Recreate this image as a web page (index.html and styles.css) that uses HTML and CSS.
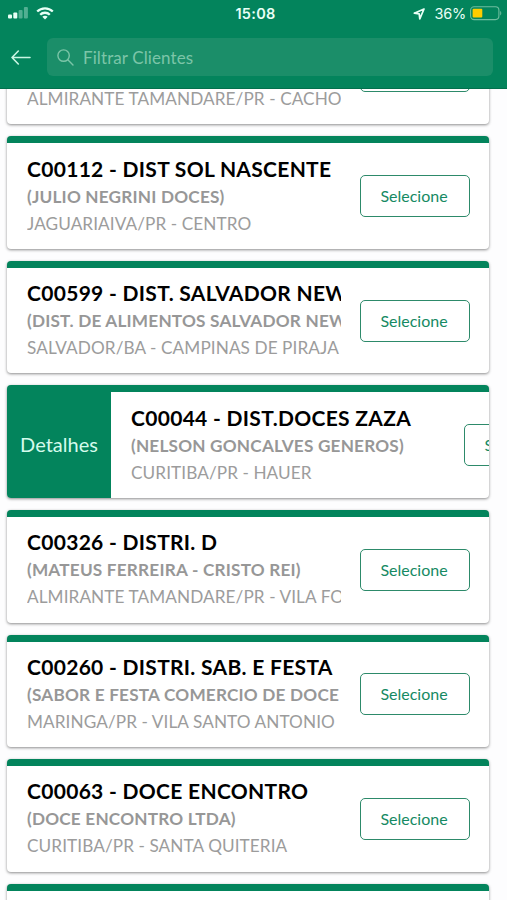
FILE: index.html
```html
<!DOCTYPE html>
<html lang="pt-BR">
<head>
    <meta charset="UTF-8">
    <meta name="viewport" content="width=device-width, initial-scale=1.0">
    <title>Clientes</title>
    <link rel="stylesheet" href="styles.css">
</head>
<body>
    <header class="header">
        <div class="status">
            <div class="status-left">
                <svg width="20" height="12" viewBox="0 0 20 12" fill="#e9fff6">
                    <rect x="0" y="7.5" width="4" height="4" rx="1"/>
                    <rect x="5.3" y="5.5" width="4" height="6" rx="1"/>
                    <rect x="10.6" y="3" width="4" height="8.5" rx="1" opacity=".35"/>
                    <rect x="15.9" y="0" width="4" height="11.5" rx="1" opacity=".35"/>
                </svg>
                <svg width="18" height="13" viewBox="0 0 18 13" fill="none" stroke="#e9fff6" stroke-width="2.3">
                    <path d="M1.2 4.5C5.5.2 12.5.2 16.8 4.5"/>
                    <path d="M4.2 7.7c2.6-2.6 7-2.6 9.6 0"/>
                    <path d="M9 12.5 6.3 9.8c1.5-1.4 3.9-1.4 5.4 0z" fill="#e9fff6" stroke="none"/>
                </svg>
            </div>
            <div class="time">15:08</div>
            <div class="status-right">
                <svg class="location" width="12" height="12" viewBox="0 0 12 12" fill="none" stroke="#e9fff6" stroke-width="1.7" stroke-linejoin="round">
                    <path d="M11 1 1.3 5.2l4.9.7.6 4.9z"/>
                </svg>
                <span class="percent">36%</span>
                <svg width="32" height="15" viewBox="0 0 32 15">
                    <rect x=".6" y=".8" width="28.3" height="12.8" rx="3.5" fill="none" stroke="#6fbd9f" stroke-width="1.1"/>
                    <rect x="2.6" y="2.8" width="9.7" height="8.8" rx="1" fill="#fc0"/>
                    <path d="M30.2 5v4.4c1.5-.6 1.5-3.8 0-4.4z" fill="#6fbd9f"/>
                </svg>
            </div>
        </div>
        <div class="toolbar">
            <svg class="back" width="20" height="15" viewBox="0 0 20 15" fill="none" stroke="#c9f5e3" stroke-width="1.6" stroke-linecap="round" stroke-linejoin="round">
                <path d="M19 7.5H1M7.3 1 1 7.5 7.3 14"/>
            </svg>
            <div class="search">
                <svg width="17" height="17" viewBox="0 0 17 17" fill="none" stroke="#7cc5a8" stroke-width="1.4" stroke-linecap="round">
                    <circle cx="6.6" cy="6.6" r="5.7"/>
                    <path d="m10.8 10.8 5.2 5.2"/>
                </svg>
                <span class="placeholder">Filtrar Clientes</span>
            </div>
        </div>
    </header>

    <main class="list">
        <div class="card first">
            <div class="content">
                <div class="info">
                    <div class="name"></div>
                    <div class="company"></div>
                    <div class="city">ALMIRANTE TAMANDARE/PR - CACHO</div>
                </div>
                <button class="select"></button>
            </div>
        </div>
        <div class="card">
            <div class="content">
                <div class="info">
                    <div class="name">C00112 - DIST SOL NASCENTE</div>
                    <div class="company">(JULIO NEGRINI DOCES)</div>
                    <div class="city">JAGUARIAIVA/PR - CENTRO</div>
                </div>
                <button class="select">Selecione</button>
            </div>
        </div>
        <div class="card">
            <div class="content">
                <div class="info">
                    <div class="name">C00599 - DIST. SALVADOR NEW</div>
                    <div class="company">(DIST. DE ALIMENTOS SALVADOR NEW</div>
                    <div class="city">SALVADOR/BA - CAMPINAS DE PIRAJA</div>
                </div>
                <button class="select">Selecione</button>
            </div>
        </div>
        <div class="card swiped">
            <div class="details">Detalhes</div>
            <div class="content">
                <div class="info">
                    <div class="name">C00044 - DIST.DOCES ZAZA</div>
                    <div class="company">(NELSON GONCALVES GENEROS)</div>
                    <div class="city">CURITIBA/PR - HAUER</div>
                </div>
                <button class="select">Selecione</button>
            </div>
        </div>
        <div class="card">
            <div class="content">
                <div class="info">
                    <div class="name">C00326 - DISTRI. D</div>
                    <div class="company">(MATEUS FERREIRA - CRISTO REI)</div>
                    <div class="city">ALMIRANTE TAMANDARE/PR - VILA FO</div>
                </div>
                <button class="select">Selecione</button>
            </div>
        </div>
        <div class="card">
            <div class="content">
                <div class="info">
                    <div class="name">C00260 - DISTRI. SAB. E FESTA</div>
                    <div class="company">(SABOR E FESTA COMERCIO DE DOCE</div>
                    <div class="city">MARINGA/PR - VILA SANTO ANTONIO</div>
                </div>
                <button class="select">Selecione</button>
            </div>
        </div>
        <div class="card">
            <div class="content">
                <div class="info">
                    <div class="name">C00063 - DOCE ENCONTRO</div>
                    <div class="company">(DOCE ENCONTRO LTDA)</div>
                    <div class="city">CURITIBA/PR - SANTA QUITERIA</div>
                </div>
                <button class="select">Selecione</button>
            </div>
        </div>
        <div class="card"></div>
    </main>
</body>
</html>
```
FILE: styles.css
```css
* {
    box-sizing: border-box;
}

body {
    margin: 0;
    height: 900px;
    overflow: hidden;
    display: flex;
    flex-direction: column;
    background-color: #fdfdfe;
    font-family: Lato, "Open Sans", sans-serif;
}

svg {
    display: block;
    flex-shrink: 0;
}

.header {
    height: 89px;
    flex-shrink: 0;
    background-color: #03845c;
    border-bottom: 1px solid #02704d;
}

.status {
    height: 27px;
    display: grid;
    grid-template-columns: 1fr auto 1fr;
    align-items: center;
    padding: 0 5px 0 8px;
    font-family: Inter, sans-serif;
    color: #e9fff6;
}

.status-left {
    display: flex;
    gap: 8px;
}

.time {
    margin-left: 1px;
    font-size: 14.5px;
    font-weight: 600;
    letter-spacing: 0.3px;
}

.status-right {
    display: flex;
    justify-content: flex-end;
    align-items: center;
}

.percent {
    font-size: 14.5px;
    margin: 0 4px 0 9px;
    letter-spacing: -0.2px;
}

.toolbar {
    display: flex;
    align-items: center;
    padding: 11px 14px 0 11px;
}

.search {
    flex: 1;
    display: flex;
    align-items: center;
    height: 38px;
    margin-left: 16px;
    padding-left: 10px;
    border-radius: 6px;
    background-color: #1b8e69;
}

.placeholder {
    margin-left: 9px;
    color: #7cc5a8;
    font-size: 17px;
    letter-spacing: 0.1px;
}

.list {
    flex: 1;
    overflow: hidden;
    padding: 0 18px 0 7px;
}

.card {
    display: flex;
    height: 112.6px;
    margin-bottom: 12px;
    border-top: 7px solid #03845c;
    border-radius: 4px;
    background-color: #fff;
    box-shadow: 0 1px 3px rgba(0, 0, 0, 0.45);
    overflow: hidden;
}

.first {
    margin-top: -77.4px;
}

.content {
    display: flex;
    flex-shrink: 0;
    align-items: center;
    width: 482px;
    padding: 0 19px 0 20px;
}

.info {
    width: 314px;
    margin-right: 19px;
    padding-bottom: 1px;
    overflow: hidden;
    white-space: nowrap;
}

.name {
    height: 28px;
    line-height: 27px;
    font-size: 21px;
    font-weight: 700;
    letter-spacing: 0.3px;
    color: #000;
}

.company {
    height: 27px;
    line-height: 27px;
    font-size: 17.2px;
    font-weight: 700;
    letter-spacing: 0.2px;
    color: #979797;
}

.city {
    height: 27px;
    line-height: 27px;
    font-size: 17.2px;
    letter-spacing: 0.08px;
    color: #9c9c9c;
}

.select {
    width: 110px;
    height: 42px;
    padding: 0 2px 1px 0;
    border: 1.5px solid #2d8a6a;
    border-radius: 5px;
    background-color: #fff;
    color: #168a63;
    font-family: inherit;
    font-size: 16px;
}

.details {
    display: flex;
    flex-shrink: 0;
    align-items: center;
    justify-content: center;
    width: 104px;
    padding-bottom: 2px;
    background-color: #03845c;
    color: #d5fbec;
    font-size: 20px;
}
```
